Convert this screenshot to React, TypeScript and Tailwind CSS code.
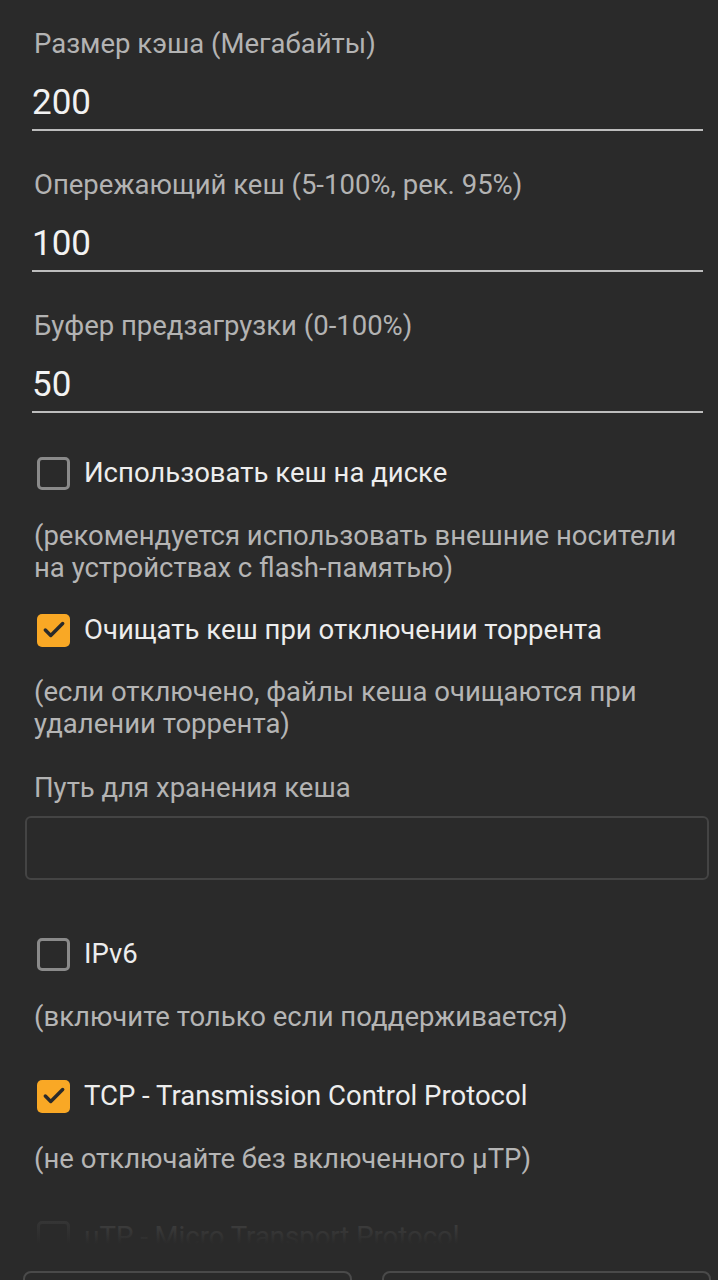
import { Check } from "lucide-react";

const fields = [
  { label: "Размер кэша (Мегабайты)", value: "200" },
  { label: "Опережающий кеш (5-100%, рек. 95%)", value: "100" },
  { label: "Буфер предзагрузки (0-100%)", value: "50" },
];

function Box({ checked }: { checked: boolean }) {
  return checked ? (
    <div className="w-[33px] h-[33px] rounded-[5px] bg-[#f9a825] flex items-center justify-center shrink-0">
      <Check className="w-[26px] h-[26px] text-[#2a2a2a]" strokeWidth={3.2} />
    </div>
  ) : (
    <div className="w-[33px] h-[33px] rounded-[5px] border-[3px] border-[#8a8a8a] shrink-0" />
  );
}

function CheckRow({ checked, label, className = "" }: { checked: boolean; label: string; className?: string }) {
  return (
    <div className={`flex items-center h-[48px] pl-[37px] gap-[14px] ${className}`}>
      <Box checked={checked} />
      <span className="text-[27.5px] text-[#ededed] leading-[32px]">{label}</span>
    </div>
  );
}

export default function App() {
  return (
    <div className="relative w-[718px] h-[1280px] overflow-hidden bg-[#2a2a2a] font-['Roboto',sans-serif]">
      <div className="flex flex-col pt-[28px]">
        {fields.map((f, i) => (
          <div key={f.label} className={`pl-[32px] pr-[15px] ${i > 0 ? "mt-[38px]" : ""}`}>
            <div className="pl-[2px] text-[27.5px] leading-[32px] text-[#b3b3b3]">{f.label}</div>
            <div className="mt-[23px] pb-[6px] border-b-2 border-[#bdbdbd] text-[35px] leading-[40px] text-[#f2f2f2]">
              {f.value}
            </div>
          </div>
        ))}

        <CheckRow className="mt-[36px]" checked={false} label="Использовать кеш на диске" />
        <p className="mt-[23px] px-[34px] text-[27.5px] leading-[32px] text-[#b5b5b5]">
          (рекомендуется использовать внешние носители на устройствах с flash-памятью)
        </p>

        <CheckRow className="mt-[22px]" checked label="Очищать кеш при отключении торрента" />
        <p className="mt-[22px] px-[34px] text-[27.5px] leading-[32px] text-[#b5b5b5]">
          (если отключено, файлы кеша очищаются при удалении торрента)
        </p>

        <div className="mt-[32px] px-[34px] text-[27.5px] leading-[32px] text-[#b3b3b3]">Путь для хранения кеша</div>
        <div className="mt-[12px] ml-[25px] mr-[9px] h-[64px] rounded-[6px] border-2 border-[#444444]" />

        <CheckRow className="mt-[50px]" checked={false} label="IPv6" />
        <p className="mt-[23px] px-[34px] text-[27.5px] leading-[32px] text-[#b5b5b5]">
          (включите только если поддерживается)
        </p>

        <CheckRow className="mt-[39px]" checked label="TCP - Transmission Control Protocol" />
        <p className="mt-[23px] px-[34px] text-[27.5px] leading-[32px] text-[#b5b5b5]">
          (не отключайте без включенного µTP)
        </p>

        <CheckRow className="mt-[38px]" checked={false} label="µTP - Micro Transport Protocol" />
      </div>

      {/* fade + bottom buttons */}
      <div className="absolute left-0 right-0 bottom-0 flex flex-col">
        <div className="h-[60px] bg-gradient-to-b from-[#2a2a2a]/0 via-[#2a2a2a]/85 to-[#2a2a2a]" />
        <div className="bg-[#2a2a2a] h-[36px] pt-[27px] flex gap-[30px] pl-[23px] pr-[7px]">
          <div className="flex-1 h-[60px] rounded-[8px] border-2 border-[#4a4a4a]" />
          <div className="flex-1 h-[60px] rounded-[8px] border-2 border-[#4a4a4a]" />
        </div>
      </div>
    </div>
  );
}
